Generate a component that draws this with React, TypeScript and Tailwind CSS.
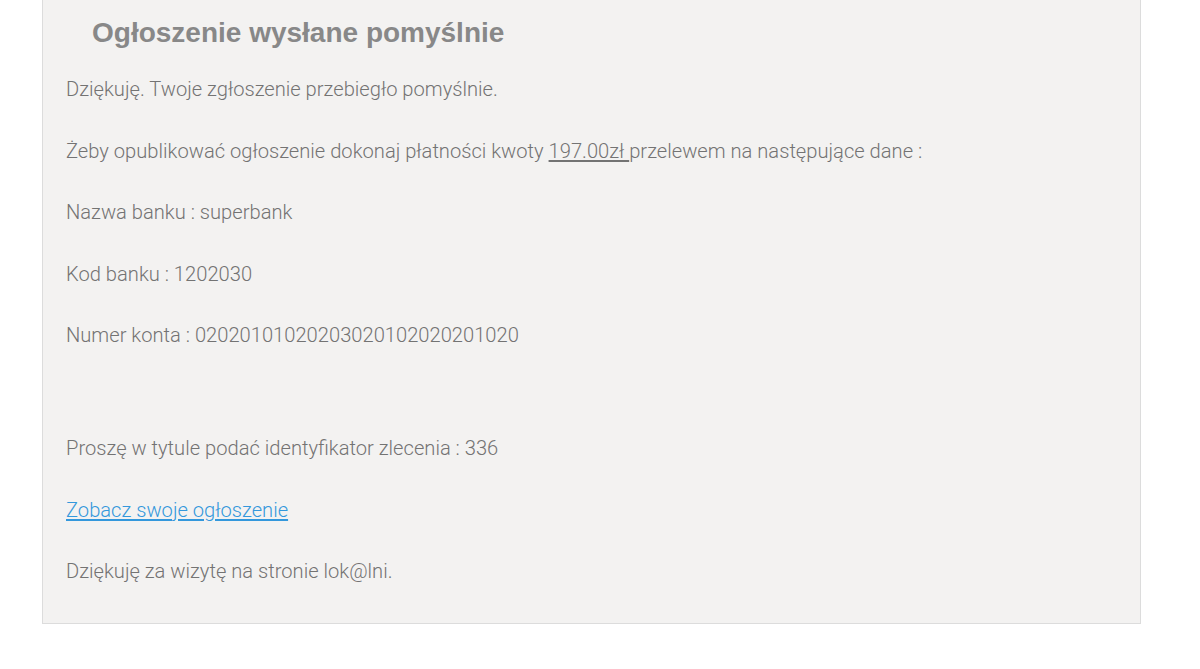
export default function App() {
	return (
		<div className="min-h-[669px] bg-white">
			<div className="ml-[42px] w-[1099px] border-x border-b border-[#dcdcdc] bg-[#f3f2f1] pl-[23px] pr-6 pt-[17px] pb-[3px]">
				<h2 className="pl-[26px] text-[28px] leading-[32px] font-bold text-[#888888] font-['Liberation_Sans',Arial,sans-serif] mb-[27px]">
					Ogłoszenie wysłane pomyślnie
				</h2>
				<div className="font-['Roboto',sans-serif] font-light text-[20.15px] leading-[26px] text-[#737373]">
					<p className="mb-[35.5px]">Dziękuję. Twoje zgłoszenie przebiegło pomyślnie.</p>
					<p className="mb-[35.5px]">
						Żeby opublikować ogłoszenie dokonaj płatności kwoty <span className="underline">197.00zł </span>przelewem na następujące dane :
					</p>
					<p className="mb-[35.5px]">Nazwa banku : superbank</p>
					<p className="mb-[35.5px]">Kod banku : 1202030</p>
					<p className="mb-[87px]">Numer konta : 02020101020203020102020201020</p>
					<p className="mb-[35.5px]">Proszę w tytule podać identyfikator zlecenia : 336</p>
					<p className="mb-[35.5px]">
						<a href="#" className="text-[#3398dc] underline">Zobacz swoje ogłoszenie</a>
					</p>
					<p className="mb-[35.5px]">Dziękuję za wizytę na stronie lok@lni.</p>
				</div>
			</div>
		</div>
	);
}
